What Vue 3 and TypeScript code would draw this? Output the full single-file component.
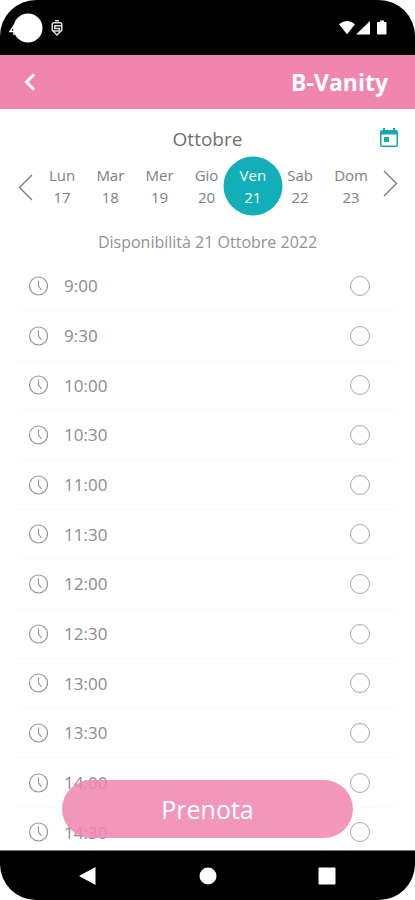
<script setup lang="ts">
import { ref } from 'vue'

interface Day {
  name: string
  date: number
}

const days: Day[] = [
  { name: 'Lun', date: 17 },
  { name: 'Mar', date: 18 },
  { name: 'Mer', date: 19 },
  { name: 'Gio', date: 20 },
  { name: 'Ven', date: 21 },
  { name: 'Sab', date: 22 },
  { name: 'Dom', date: 23 },
]

const slots: string[] = [
  '9:00', '9:30', '10:00', '10:30', '11:00', '11:30',
  '12:00', '12:30', '13:00', '13:30', '14:00', '14:30',
]

const selectedDate = ref<number>(21)
const selectedSlot = ref<string>('')
</script>

<template>
  <div class="phone">
    <div class="status">
      <svg width="50" height="32" viewBox="0 0 50 32">
        <path d="M15 12 10 19.500h6M14 13v10" fill="none" stroke="#fff" stroke-width="1.500" />
        <circle cx="28" cy="16" r="14.500" fill="#fff" />
      </svg>
      <svg width="14" height="18" viewBox="0 0 14 18" fill="none" stroke="#ddd" stroke-width="1.500">
        <path d="M5 1.800h4M4 3.800h6q1.800 0 1.800 1.800v5.600L7 16l-4.800-4.800V5.600q0-1.800 1.800-1.800z" />
        <path d="M11.500 6.800H4.800v2.600h4.700v2.600H3" />
      </svg>
      <svg class="status-right" width="50" height="16" viewBox="0 0 50 16" fill="#fff">
        <path d="M0 4.200Q8-2.200 16 4.200L8 14.200z" />
        <path d="M31 1v13.500H17z" />
        <path d="M39 2h2V.500h4V2h1.500q1 0 1 1v10.500q0 1-1 1H39q-1 0-1-1V3q0-1 1-1z" />
      </svg>
    </div>

    <header class="bar">
      <button class="plain back" type="button" aria-label="Indietro">
        <svg width="12" height="18" viewBox="0 0 12 18" fill="none" stroke="#fff" stroke-width="3">
          <path d="M10 1.500 2.500 9l7.500 7.500" />
        </svg>
      </button>
      <h1>B-Vanity</h1>
    </header>

    <main>
      <div class="month">
        <h2>Ottobre</h2>
        <button class="plain calendar" type="button" aria-label="Calendario">
          <svg width="18" height="22" viewBox="0 0 18 22">
            <path
              fill="#12a9b1"
              fill-rule="evenodd"
              d="M3 0h2v2h8V0h2v2h1q2 0 2 2v13q0 2-2 2H2q-2 0-2-2V4q0-2 2-2h1zM1.500 6.500v11h15v-11zM4 9h5v5H4z"
            />
          </svg>
        </button>
      </div>

      <div class="week">
        <button class="plain" type="button" aria-label="Settimana precedente">
          <svg width="16" height="32" viewBox="0 0 16 32" fill="none" stroke="#777" stroke-width="1.300">
            <path d="M14 5 1.500 17.500 14 30" />
          </svg>
        </button>
        <div class="days">
          <button
            v-for="day in days"
            :key="day.date"
            type="button"
            class="plain day"
            :class="{ selected: day.date === selectedDate }"
            @click="selectedDate = day.date"
          >
            <span>{{ day.name }}</span>
            <span>{{ day.date }}</span>
          </button>
        </div>
        <button class="plain" type="button" aria-label="Settimana successiva">
          <svg width="16" height="32" viewBox="0 0 16 32" fill="none" stroke="#777" stroke-width="1.300">
            <path d="M2 1 14.500 13.500 2 26" />
          </svg>
        </button>
      </div>

      <p class="availability">Disponibilità {{ selectedDate }} Ottobre 2022</p>

      <div class="slots">
        <label v-for="slot in slots" :key="slot" class="slot">
          <svg width="20" height="20" viewBox="0 0 20 20" fill="none" stroke="#959595" stroke-width="1.200">
            <circle cx="10.500" cy="10" r="9" />
            <path d="M10.500 4.500V10l3 4" />
          </svg>
          <span>{{ slot }}</span>
          <input v-model="selectedSlot" type="radio" name="slot" :value="slot" />
        </label>
      </div>

      <button class="book" type="button">Prenota</button>
    </main>

    <nav class="system">
      <button class="plain" type="button" aria-label="Torna indietro">
        <svg width="18" height="20" viewBox="0 0 18 20"><path d="M16.500 1v18L0 10z" fill="#fff" /></svg>
      </button>
      <button class="plain" type="button" aria-label="Home">
        <svg width="18" height="20" viewBox="0 0 18 20"><circle cx="9" cy="10" r="8.500" fill="#fff" /></svg>
      </button>
      <button class="plain" type="button" aria-label="App recenti">
        <svg width="18" height="20" viewBox="0 0 18 20"><rect x=".5" y="1.500" width="17" height="17" rx="1" fill="#fff" /></svg>
      </button>
    </nav>
  </div>
</template>

<style>
body {
  margin: 0;
  background: #fff;
}
</style>

<style scoped>
.phone {
  display: flex;
  flex-direction: column;
  height: 100vh;
  overflow: hidden;
  border-radius: 36px;
  background: #fff;
  color: #808080;
  font-family: "Open Sans", "Noto Sans", sans-serif;
}
.plain {
  padding: 0;
  border: 0;
  background: none;
  color: inherit;
  font: inherit;
  cursor: pointer;
}
svg {
  display: block;
  flex: none;
}
.status {
  display: flex;
  flex: none;
  align-items: center;
  height: 55px;
  padding-right: 26px;
  background: #000;
}
.status-right {
  margin-left: auto;
}
.bar {
  display: flex;
  flex: none;
  align-items: center;
  justify-content: space-between;
  height: 54px;
  padding: 0 27px 0 24px;
  background: #f086ad;
  color: #fff;
}
h1 {
  margin: 0;
  font-size: 23px;
  font-weight: 700;
  line-height: 32px;
}
main {
  position: relative;
  flex: 1;
  min-height: 0;
  overflow: hidden;
}
.month {
  display: grid;
  grid-template-columns: 1fr auto 1fr;
  align-items: center;
  padding: 16px 17px 0;
}
h2 {
  grid-column: 2;
  margin: 0;
  color: #707070;
  font-size: 19px;
  font-weight: 400;
  line-height: 28px;
}
.calendar {
  justify-self: end;
}
.week {
  display: flex;
  align-items: center;
  justify-content: space-between;
  height: 66px;
  padding: 0 17px 0 18px;
}
.days {
  display: flex;
  flex: 1;
  justify-content: space-between;
  padding: 0 14px 0 15px;
}
.day {
  position: relative;
  display: grid;
  justify-items: center;
  font-size: 15px;
  line-height: 22px;
}
.day span {
  position: relative;
}
.selected {
  color: #fff;
}
.selected::before {
  position: absolute;
  top: 50%;
  left: 50%;
  width: 59px;
  height: 59px;
  border-radius: 50%;
  background: #12afb9;
  content: "";
  transform: translate(-50%, -50%);
}
.availability {
  margin: 12px 0 8px;
  color: #929292;
  font-size: 16px;
  line-height: 22px;
  text-align: center;
}
.slots {
  display: grid;
  grid-auto-rows: 50px 50px 49px;
  margin: 0 17px;
}
.slot {
  display: flex;
  align-items: center;
  gap: 16px;
  box-sizing: border-box;
  padding: 0 28px 0 11px;
  border-bottom: 1px solid #fafafa;
  color: #8c8c8c;
  font-size: 17px;
}
.slot input {
  width: 20px;
  height: 20px;
  margin: 0 0 0 auto;
  border: 1px solid #a8a8a8;
  border-radius: 50%;
  appearance: none;
}
.slot input:checked {
  background: #12afb9;
}
.book {
  position: absolute;
  right: 15%;
  bottom: 12px;
  left: 15%;
  height: 58px;
  border: 0;
  border-radius: 29px;
  background: rgb(240 134 173 / 86%);
  color: #fff;
  font: inherit;
  font-size: 25px;
}
.system {
  display: flex;
  flex: none;
  align-items: center;
  justify-content: space-between;
  box-sizing: border-box;
  height: 50px;
  padding: 0 79px;
  border-top: 1px solid #777;
  background: #000;
}
</style>
